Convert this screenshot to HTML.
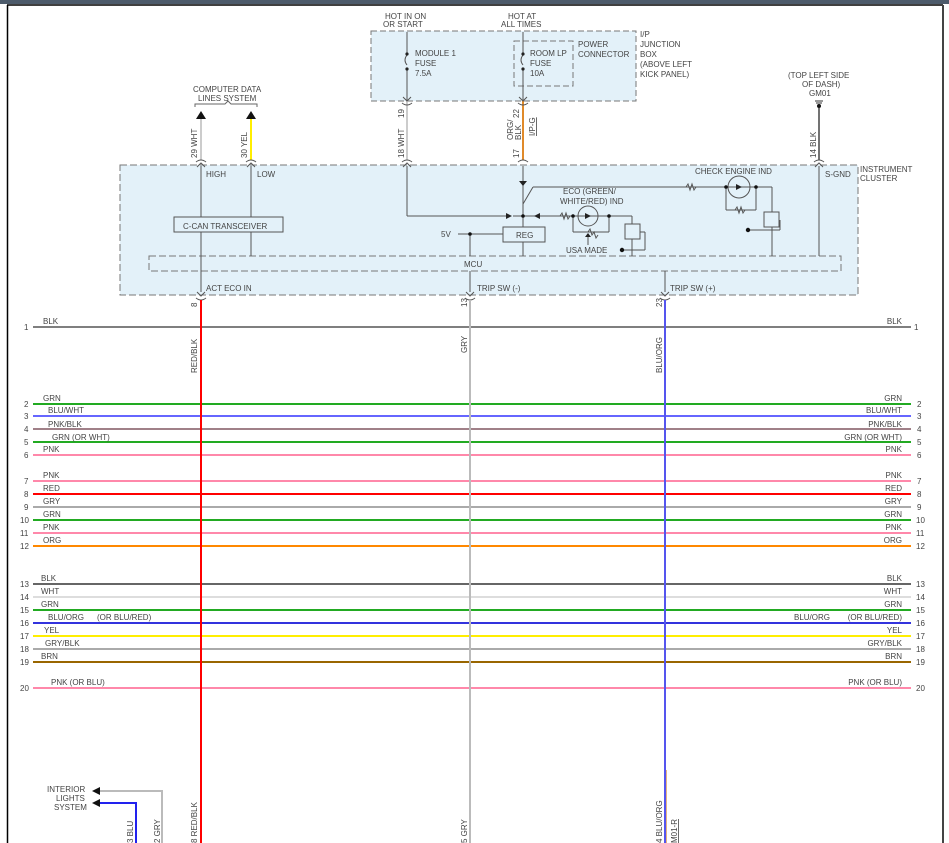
<!DOCTYPE html>
<html><head><meta charset="utf-8"><style>
html,body{margin:0;padding:0;background:#fff;width:949px;height:843px;overflow:hidden}
svg{display:block}
text{font-family:"Liberation Sans",sans-serif;font-size:8px;fill:#444}
</style></head><body>
<svg width="949" height="843" viewBox="0 0 949 843" xmlns="http://www.w3.org/2000/svg">
<rect x="0" y="0" width="949" height="4" fill="#4d5b6b"/>
<line x1="7" y1="5" x2="943" y2="5" stroke="#000" stroke-width="1.5"/>
<line x1="7.5" y1="5" x2="7.5" y2="843" stroke="#000" stroke-width="1.5"/>
<line x1="943" y1="5" x2="943" y2="843" stroke="#444" stroke-width="2"/>

<!-- IP junction box -->
<rect x="371" y="31" width="265" height="70" fill="#e3f1f9" stroke="#777" stroke-dasharray="6,3"/>
<rect x="514" y="41" width="59" height="45" fill="none" stroke="#777" stroke-dasharray="6,3"/>
<text x="385" y="19">HOT IN ON</text><text x="383" y="27">OR START</text>
<text x="508" y="19">HOT AT</text><text x="501" y="27">ALL TIMES</text>
<text x="415" y="56">MODULE 1</text><text x="415" y="66">FUSE</text><text x="415" y="76">7.5A</text>
<text x="530" y="56">ROOM LP</text><text x="530" y="66">FUSE</text><text x="530" y="76">10A</text>
<text x="578" y="47">POWER</text><text x="578" y="57">CONNECTOR</text>
<text x="640" y="37">I/P</text><text x="640" y="47">JUNCTION</text><text x="640" y="57">BOX</text><text x="640" y="67">(ABOVE LEFT</text><text x="640" y="77">KICK PANEL)</text>
<g stroke="#555" fill="none">
<line x1="407" y1="32" x2="407" y2="53"/><path d="M407 55 q-4 5 0 10"/><line x1="407" y1="69" x2="407" y2="101"/>
<line x1="523" y1="32" x2="523" y2="53"/><path d="M523 55 q-4 5 0 10"/><line x1="523" y1="69" x2="523" y2="101"/>
</g>
<circle cx="407" cy="54" r="1.6" fill="#222"/><circle cx="407" cy="69" r="1.6" fill="#222"/>
<circle cx="523" cy="54" r="1.6" fill="#222"/><circle cx="523" cy="69" r="1.6" fill="#222"/>

<!-- Instrument cluster -->
<rect x="120" y="165" width="738" height="130" fill="#e3f1f9" stroke="#777" stroke-dasharray="7,3"/>
<rect x="149" y="256" width="692" height="15" fill="none" stroke="#777" stroke-dasharray="7,3"/>
<text x="860" y="172">INSTRUMENT</text><text x="860" y="181">CLUSTER</text>
<text x="464" y="267">MCU</text>

<!-- wires from top to cluster -->
<line x1="407" y1="101" x2="407" y2="160" stroke="#ccc" stroke-width="2"/>
<line x1="523" y1="101" x2="523" y2="160" stroke="#e08a2a" stroke-width="2"/>
<line x1="201" y1="118" x2="201" y2="160" stroke="#ccc" stroke-width="2"/>
<line x1="251" y1="118" x2="251" y2="160" stroke="#ffee00" stroke-width="2"/>
<line x1="819" y1="108" x2="819" y2="160" stroke="#444" stroke-width="1.5"/>
<polygon points="196,119 206,119 201,111" fill="#111"/>
<polygon points="246,119 256,119 251,111" fill="#111"/>
<text x="193" y="92">COMPUTER DATA</text><text x="198" y="101">LINES SYSTEM</text>
<path d="M195 107 v-3 h30 l3 -3 l3 3 h26 v3" fill="none" stroke="#666"/>
<text x="788" y="78">(TOP LEFT SIDE</text><text x="802" y="87">OF DASH)</text><text x="809" y="96">GM01</text>
<line x1="815" y1="101" x2="823" y2="101" stroke="#333"/><line x1="816" y1="103" x2="822" y2="103" stroke="#333"/>
<circle cx="819" cy="106" r="2" fill="#111"/>

<g transform="rotate(-90)">
<text x="-158" y="197">29  WHT</text><text x="-158" y="247">30  YEL</text>
<text x="-158" y="404">18  WHT</text><text x="-118" y="404">19</text>
<text x="-158" y="519">17</text><text x="-140" y="513">ORG/</text><text x="-140" y="521">BLK</text>
<text x="-118" y="519">22</text><text x="-136" y="535" style="text-decoration:underline">I/P-G</text>
<text x="-158" y="816">14  BLK</text>
<text x="-307" y="197">8</text><text x="-307" y="467">13</text><text x="-307" y="662">23</text>
<text x="-373" y="197">RED/BLK</text><text x="-353" y="467">GRY</text><text x="-373" y="662">BLU/ORG</text>
<text x="-843" y="133">3   BLU</text><text x="-843" y="160">2   GRY</text>
<text x="-843" y="197">8  RED/BLK</text><text x="-843" y="467">5   GRY</text>
<text x="-843" y="662">4  BLU/ORG</text><text x="-843" y="677" style="text-decoration:underline">M01-R</text>
</g>

<!-- connector marks -->
<g fill="none" stroke="#555">
<path d="M196 162 q5 -4 10 0 M197 167 l4 -4 l4 4"/>
<path d="M246 162 q5 -4 10 0 M247 167 l4 -4 l4 4"/>
<path d="M402 162 q5 -4 10 0 M403 167 l4 -4 l4 4"/>
<path d="M518 162 q5 -4 10 0"/>
<path d="M814 162 q5 -4 10 0 M815 167 l4 -4 l4 4"/>
<path d="M402 103 q5 4 10 0 M518 103 q5 4 10 0 M403 97 l4 4 l4 -4 M519 97 l4 4 l4 -4"/>
<path d="M196 298 q5 4 10 0 M197 292 l4 4 l4 -4"/>
<path d="M465 298 q5 4 10 0 M466 292 l4 4 l4 -4"/>
<path d="M660 298 q5 4 10 0 M661 292 l4 4 l4 -4"/>
</g>

<!-- internal circuit -->
<g stroke="#555" fill="none">
<line x1="201" y1="166" x2="201" y2="292"/><line x1="251" y1="166" x2="251" y2="256"/>
<rect x="174" y="217" width="109" height="15" fill="#e3f1f9"/>
<line x1="407" y1="166" x2="407" y2="216"/><line x1="407" y1="216" x2="506" y2="216"/>
<line x1="513" y1="216" x2="538" y2="216"/>
<line x1="523" y1="166" x2="523" y2="256"/>
<line x1="523" y1="204" x2="533" y2="187"/><line x1="533" y1="187" x2="672" y2="187"/>
<line x1="672" y1="187" x2="772" y2="187"/><line x1="772" y1="187" x2="772" y2="212"/>
<rect x="764" y="212" width="15" height="15" fill="#e3f1f9"/>
<line x1="772" y1="227" x2="772" y2="256"/>
<line x1="726" y1="187" x2="726" y2="210"/><line x1="726" y1="210" x2="756" y2="210"/><line x1="756" y1="187" x2="756" y2="210"/>
<circle cx="739" cy="187" r="11"/>
<line x1="538" y1="216" x2="632" y2="216"/><line x1="632" y1="216" x2="632" y2="224"/>
<rect x="625" y="224" width="15" height="15" fill="#e3f1f9"/><line x1="632" y1="239" x2="632" y2="256"/>
<line x1="573" y1="216" x2="573" y2="232"/><line x1="573" y1="232" x2="609" y2="232"/><line x1="609" y1="216" x2="609" y2="232"/>
<circle cx="588" cy="216" r="10"/>
<line x1="588" y1="245" x2="588" y2="235"/>
<rect x="503" y="227" width="42" height="15" fill="#e3f1f9"/>
<line x1="523" y1="242" x2="523" y2="256"/>
<line x1="470" y1="234" x2="503" y2="234"/><line x1="458" y1="234" x2="470" y2="234"/><line x1="470" y1="234" x2="470" y2="256"/>
<line x1="819" y1="166" x2="819" y2="256"/>
<line x1="470" y1="271" x2="470" y2="292"/><line x1="665" y1="271" x2="665" y2="292"/>
<path d="M560 216 l2 -3 l2 6 l2 -6 l2 6 l2 -3 M588 232 l2 -3 l2 6 l2 -3 l2 6 l2 -3 M686 187 l2 -3 l2 6 l2 -6 l2 6 l2 -3 M735 210 l2 -3 l2 6 l2 -6 l2 6 l2 -3"/>
<line x1="780" y1="220" x2="780" y2="230"/><line x1="780" y1="230" x2="750" y2="230"/>
<line x1="640" y1="232" x2="645" y2="232"/><line x1="645" y1="232" x2="645" y2="250"/><line x1="645" y1="250" x2="624" y2="250"/>
</g>
<circle cx="523" cy="216" r="1.8" fill="#111"/><circle cx="470" cy="234" r="1.8" fill="#111"/>
<circle cx="573" cy="216" r="1.8" fill="#111"/><circle cx="609" cy="216" r="1.8" fill="#111"/>
<circle cx="726" cy="187" r="1.8" fill="#111"/><circle cx="756" cy="187" r="1.8" fill="#111"/>
<circle cx="622" cy="250" r="2.2" fill="#111"/><circle cx="748" cy="230" r="2.2" fill="#111"/>
<polygon points="506,213 506,219 512,216" fill="#222"/><polygon points="519,181 527,181 523,186" fill="#222"/>
<polygon points="540,213 540,219 534,216" fill="#222"/>
<polygon points="585,213 585,219 591,216" fill="#222"/><polygon points="736,184 736,190 742,187" fill="#222"/>
<polygon points="585,237 591,237 588,233" fill="#222"/>
<text x="206" y="177">HIGH</text><text x="257" y="177">LOW</text>
<text x="183" y="229">C-CAN TRANSCEIVER</text>
<text x="516" y="238">REG</text><text x="441" y="237">5V</text>
<text x="563" y="194">ECO (GREEN/</text><text x="560" y="204">WHITE/RED) IND</text>
<text x="566" y="253">USA MADE</text>
<text x="695" y="174">CHECK ENGINE IND</text>
<text x="825" y="177">S-GND</text>
<text x="206" y="291">ACT ECO IN</text><text x="477" y="291">TRIP SW (-)</text><text x="670" y="291">TRIP SW (+)</text>

<!-- horizontal wires -->
<g stroke-width="2">
<line x1="33" y1="327" x2="911" y2="327" stroke="#555" stroke-width="1.5"/>
<line x1="33" y1="404" x2="911" y2="404" stroke="#22aa22"/>
<line x1="33" y1="416" x2="911" y2="416" stroke="#3333ff" stroke-width="1.5"/>
<line x1="33" y1="429" x2="911" y2="429" stroke="#a08088"/>
<line x1="33" y1="442" x2="911" y2="442" stroke="#22aa22"/>
<line x1="33" y1="455" x2="911" y2="455" stroke="#ff88aa"/>
<line x1="33" y1="481" x2="911" y2="481" stroke="#ff88aa"/>
<line x1="33" y1="494" x2="911" y2="494" stroke="#ff0000"/>
<line x1="33" y1="507" x2="911" y2="507" stroke="#aaaaaa"/>
<line x1="33" y1="520" x2="911" y2="520" stroke="#22aa22"/>
<line x1="33" y1="533" x2="911" y2="533" stroke="#ff88aa"/>
<line x1="33" y1="546" x2="911" y2="546" stroke="#ff8800"/>
<line x1="33" y1="584" x2="911" y2="584" stroke="#666"/>
<line x1="33" y1="597" x2="911" y2="597" stroke="#dddddd"/>
<line x1="33" y1="610" x2="911" y2="610" stroke="#22aa22"/>
<line x1="33" y1="623" x2="911" y2="623" stroke="#3333dd"/>
<line x1="33" y1="636" x2="911" y2="636" stroke="#ffee00"/>
<line x1="33" y1="649" x2="911" y2="649" stroke="#aaaaaa"/>
<line x1="33" y1="662" x2="911" y2="662" stroke="#996600"/>
<line x1="33" y1="688" x2="911" y2="688" stroke="#ff88aa"/>
</g>
<g>
<text x="24" y="330">1</text><text x="24" y="407">2</text><text x="24" y="419">3</text><text x="24" y="432">4</text><text x="24" y="445">5</text><text x="24" y="458">6</text>
<text x="24" y="484">7</text><text x="24" y="497">8</text><text x="24" y="510">9</text><text x="20" y="523">10</text><text x="20" y="536">11</text><text x="20" y="549">12</text>
<text x="20" y="587">13</text><text x="20" y="600">14</text><text x="20" y="613">15</text><text x="20" y="626">16</text><text x="20" y="639">17</text><text x="20" y="652">18</text><text x="20" y="665">19</text><text x="20" y="691">20</text>
<text x="914" y="330">1</text><text x="917" y="407">2</text><text x="917" y="419">3</text><text x="917" y="432">4</text><text x="917" y="445">5</text><text x="917" y="458">6</text>
<text x="917" y="484">7</text><text x="917" y="497">8</text><text x="917" y="510">9</text><text x="916" y="523">10</text><text x="916" y="536">11</text><text x="916" y="549">12</text>
<text x="916" y="587">13</text><text x="916" y="600">14</text><text x="916" y="613">15</text><text x="916" y="626">16</text><text x="916" y="639">17</text><text x="916" y="652">18</text><text x="916" y="665">19</text><text x="916" y="691">20</text>
</g>
<g>
<text x="43" y="324">BLK</text><text x="43" y="401">GRN</text><text x="48" y="413">BLU/WHT</text><text x="48" y="427">PNK/BLK</text><text x="52" y="440">GRN (OR WHT)</text><text x="43" y="452">PNK</text>
<text x="43" y="478">PNK</text><text x="43" y="491">RED</text><text x="43" y="504">GRY</text><text x="43" y="517">GRN</text><text x="43" y="530">PNK</text><text x="43" y="543">ORG</text>
<text x="41" y="581">BLK</text><text x="41" y="594">WHT</text><text x="41" y="607">GRN</text><text x="48" y="620">BLU/ORG</text><text x="97" y="620">(OR BLU/RED)</text><text x="44" y="633">YEL</text><text x="45" y="646">GRY/BLK</text><text x="41" y="659">BRN</text><text x="51" y="685">PNK (OR BLU)</text>
</g>
<g text-anchor="end">
<text x="902" y="324">BLK</text><text x="902" y="401">GRN</text><text x="902" y="413">BLU/WHT</text><text x="902" y="427">PNK/BLK</text><text x="902" y="440">GRN (OR WHT)</text><text x="902" y="452">PNK</text>
<text x="902" y="478">PNK</text><text x="902" y="491">RED</text><text x="902" y="504">GRY</text><text x="902" y="517">GRN</text><text x="902" y="530">PNK</text><text x="902" y="543">ORG</text>
<text x="902" y="581">BLK</text><text x="902" y="594">WHT</text><text x="902" y="607">GRN</text><text x="830" y="620">BLU/ORG</text><text x="902" y="620">(OR BLU/RED)</text><text x="902" y="633">YEL</text><text x="902" y="646">GRY/BLK</text><text x="902" y="659">BRN</text><text x="902" y="685">PNK (OR BLU)</text>
</g>

<!-- verticals -->
<line x1="201" y1="300" x2="201" y2="843" stroke="#ff0000" stroke-width="2"/>
<line x1="470" y1="300" x2="470" y2="843" stroke="#bbbbbb" stroke-width="2"/>
<line x1="665" y1="300" x2="665" y2="843" stroke="#5555ee" stroke-width="2"/>
<line x1="666.5" y1="770" x2="666.5" y2="843" stroke="#e0a060" stroke-width="0.8"/>

<!-- interior lights -->
<polyline points="100,791 162,791 162,843" fill="none" stroke="#bbb" stroke-width="2"/>
<polyline points="100,803 136,803 136,843" fill="none" stroke="#2222ee" stroke-width="2"/>
<polygon points="92,791 100,787 100,795" fill="#111"/><polygon points="92,803 100,799 100,807" fill="#111"/>
<text x="47" y="792">INTERIOR</text><text x="56" y="801">LIGHTS</text><text x="54" y="810">SYSTEM</text>
</svg>
</body></html>
